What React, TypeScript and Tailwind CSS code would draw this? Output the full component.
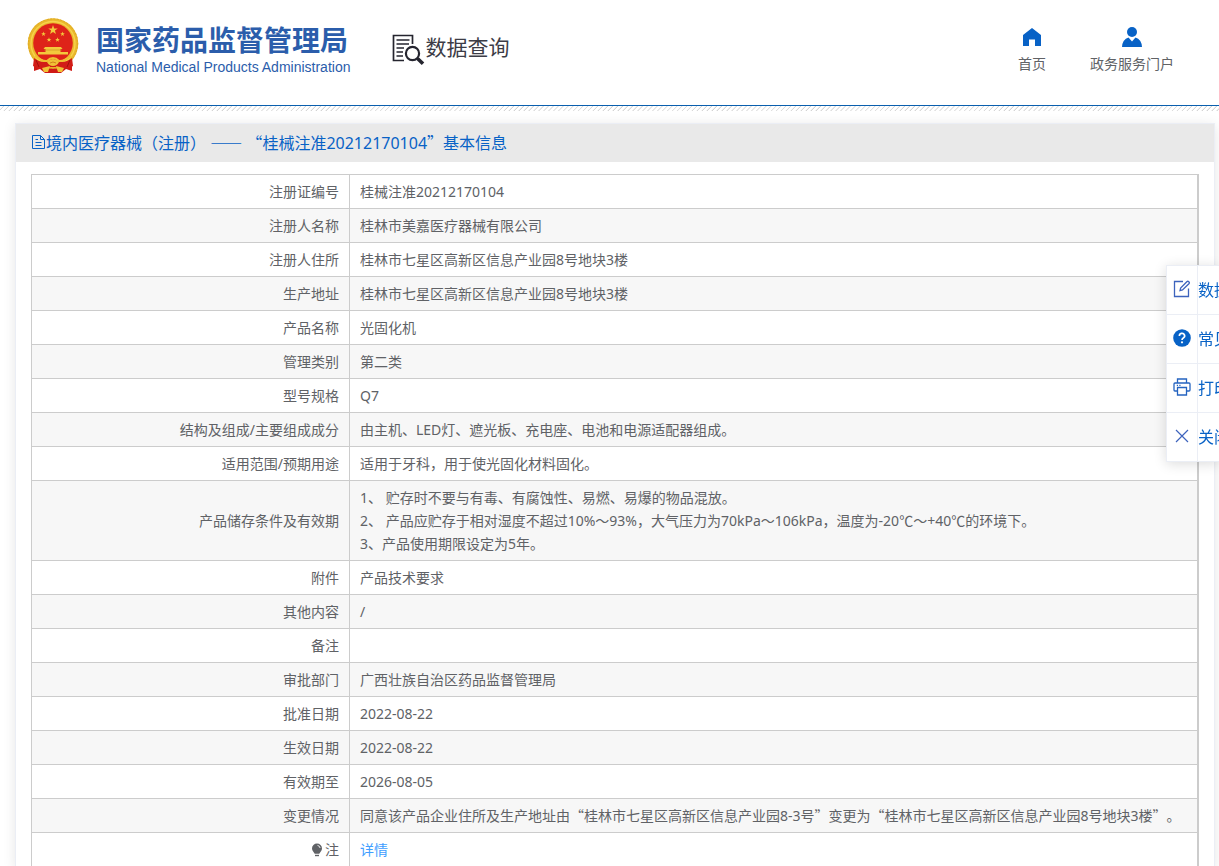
import { Fragment, type ReactNode } from "react";

const QUOTES = /([“”—～℃]+)/;

function Mixed({ text }: { text: string }) {
  return (
    <>
      {text.split(QUOTES).map((part, i) =>
        QUOTES.test(part) ? (
          <span key={i} className="font-['Noto_Sans_CJK_SC',sans-serif]">
            {part}
          </span>
        ) : (
          <Fragment key={i}>{part}</Fragment>
        ),
      )}
    </>
  );
}

const star = (cx: number, cy: number, r: number) =>
  Array.from({ length: 10 }, (_, i) => {
    const a = (Math.PI / 5) * i - Math.PI / 2;
    const d = i % 2 ? r * 0.4 : r;
    return `${(cx + d * Math.cos(a)).toFixed(2)},${(cy + d * Math.sin(a)).toFixed(2)}`;
  }).join(" ");

function Emblem() {
  return (
    <svg width="52" height="56" viewBox="0 0 52 56" aria-hidden="true">
      <path d="M7 39 L7 53 L13 51 L18 55 H34 L39 51 L45 53 L45 39 Z" fill="#cf1a16" />
      <circle cx="26" cy="25.5" r="25.3" fill="#eab92c" />
      <circle cx="26" cy="25.5" r="24.6" fill="none" stroke="#dfa824" strokeWidth="1" strokeDasharray="2 1.4" />
      <circle cx="26" cy="25.5" r="22" fill="none" stroke="#f7d34c" strokeWidth="1.4" />
      <circle cx="26" cy="25" r="19.8" fill="#de2319" />
      <polygon points={star(26, 12, 5)} fill="#f3c93c" />
      <polygon points={star(16.5, 16, 2.5)} fill="#f3c93c" />
      <polygon points={star(35.5, 16, 2.5)} fill="#f3c93c" />
      <polygon points={star(22, 21.7, 2.5)} fill="#f3c93c" />
      <polygon points={star(30.5, 21.7, 2.5)} fill="#f3c93c" />
      <path d="M18 29 H34 L35.5 31 H33.5 V34 H41 V36.500 H11 V34 H18.500 V31 H16.500 Z" fill="#f3c93c" />
      <path d="M17 32 H35" stroke="#c98a1c" strokeWidth=".6" />
      <path d="M7 40 Q15 46 21 43 Q26 39 31 43 Q37 46 45 40 L46 48 Q38 53 31 49 H21 Q14 53 6 48 Z" fill="#d21d17" />
      <path d="M8 38 Q15 43.500 20 43 Q23 40 26 40 Q29 40 32 43 Q37 43.500 44 38" fill="none" stroke="#f0bf32" strokeWidth="2" />
      <path d="M20 44 Q23 41 26 41 Q29 41 32 44 Q30 48 26 48 Q22 48 20 44 Z" fill="#f0c236" />
      <path d="M23 45 Q26 43 29 45" fill="none" stroke="#d2801b" strokeWidth="1" />
      <path d="M15 50 L23 48 L21 54 L17 54 Z M37 50 L29 48 L31 54 L35 54 Z" fill="#f0c236" />
      <path d="M9 42 L12 49 M43 42 L40 49" stroke="#9f100e" strokeWidth="1" />
    </svg>
  );
}

function SearchDoc() {
  return (
    <svg width="33" height="32" viewBox="0 0 33 32" fill="none" stroke="#25252f" aria-hidden="true">
      <path d="M20.500 10 V1.500 H1.500 V26.500 H12" strokeWidth="1.700" />
      <path d="M4.500 6 H17.500 M4.500 10 H17 M4.500 14 H12 M4.500 18 H11 M4.500 22 H11" strokeWidth="1.500" />
      <circle cx="20.500" cy="19.500" r="6.600" strokeWidth="2.200" />
      <path d="M25.500 24.500 L31 29.800" strokeWidth="3.600" />
    </svg>
  );
}

function HomeIcon() {
  return (
    <svg width="20" height="20" viewBox="0 0 20 20" aria-hidden="true">
      <path d="M10 1 L19 8 V19 H13 V12.500 H7 V19 H1 V8 Z" fill="#0862c6" />
    </svg>
  );
}

function UserIcon() {
  return (
    <svg width="20" height="20" viewBox="0 0 20 20" fill="#0862c6" aria-hidden="true">
      <circle cx="10" cy="5" r="5" />
      <path d="M6.500 10.600 L10 14.500 L13.500 10.600 Q19.500 12.500 20 20 H0 Q.5 12.500 6.500 10.600 Z" />
    </svg>
  );
}

function DocIcon() {
  return (
    <svg width="15" height="16" viewBox="0 0 15 16" fill="none" stroke="#0862c6" aria-hidden="true">
      <path d="M1.500 1.500 H9.500 L13.500 5.500 V14.500 H1.500 Z M9.500 1.500 V5.500 H13.500 M4.500 5.500 H7 M4.500 8.500 H10.500 M4.500 11.500 H10.500" />
    </svg>
  );
}

function BulbIcon() {
  return (
    <svg width="12" height="14" viewBox="0 0 12 14" className="mr-0.5 inline-block align-[-2px]" aria-hidden="true">
      <path d="M6 .5 A5 5 0 0 1 11 5.500 C11 8 9.200 8.800 8.300 10.800 H3.700 C2.800 8.800 1 8 1 5.500 A5 5 0 0 1 6 .5 Z" fill="#606266" />
      <path d="M4 12.500 H8" stroke="#606266" strokeWidth="1.400" />
      <path d="M6.500 2.400 Q8.800 2.800 9.100 5" fill="none" stroke="#fff" strokeWidth=".9" />
    </svg>
  );
}

function EditIcon() {
  return (
    <svg width="18" height="18" viewBox="0 0 18 18" fill="none" stroke="#3d63bd" strokeWidth="1.300" aria-hidden="true">
      <path d="M10 1.500 H1.500 V16.500 H15.500 V8.500" />
      <path d="M13.800 1.700 Q14.800 .8 15.800 1.700 Q16.800 2.700 15.900 3.700 L9.500 10 L7 10.700 L7.600 8 Z" />
    </svg>
  );
}

function QuestionIcon() {
  return (
    <svg width="18" height="18" viewBox="0 0 18 18" fill="none" aria-hidden="true">
      <circle cx="9" cy="9" r="8.800" fill="#0862c6" />
      <path d="M6.400 7 A2.600 2.500 0 1 1 10.300 9 Q9 9.800 9 11" stroke="#fff" strokeWidth="1.700" />
      <circle cx="9" cy="13.300" r="1.100" fill="#fff" />
    </svg>
  );
}

function PrintIcon() {
  return (
    <svg width="18" height="18" viewBox="0 0 18 18" fill="none" stroke="#2463c0" strokeWidth="1.300" aria-hidden="true">
      <path d="M4.500 5 V1 H13.500 V5 M4.500 13 H2 Q1 13 1 12 V6 Q1 5 2 5 H16 Q17 5 17 6 V12 Q17 13 16 13 H13.500 M4.500 9.500 H13.500 V17 H4.500 Z M3.800 7.300 H5 M6.300 7.300 H7.500" />
    </svg>
  );
}

function CloseIcon() {
  return (
    <svg width="18" height="18" viewBox="0 0 18 18" fill="none" stroke="#3d63bd" strokeWidth="1.200" aria-hidden="true">
      <path d="M3 3 L15 15 M15 3 L3 15" />
    </svg>
  );
}

const rows: { label: ReactNode; value: ReactNode }[] = [
  { label: "注册证编号", value: "桂械注准20212170104" },
  { label: "注册人名称", value: "桂林市美嘉医疗器械有限公司" },
  { label: "注册人住所", value: "桂林市七星区高新区信息产业园8号地块3楼" },
  { label: "生产地址", value: "桂林市七星区高新区信息产业园8号地块3楼" },
  { label: "产品名称", value: "光固化机" },
  { label: "管理类别", value: "第二类" },
  { label: "型号规格", value: "Q7" },
  { label: "结构及组成/主要组成成分", value: "由主机、LED灯、遮光板、充电座、电池和电源适配器组成。" },
  { label: "适用范围/预期用途", value: "适用于牙科，用于使光固化材料固化。" },
  {
    label: "产品储存条件及有效期",
    value: (
      <>
        1、 贮存时不要与有毒、有腐蚀性、易燃、易爆的物品混放。
        <br />
        <Mixed text="2、 产品应贮存于相对湿度不超过10%～93%，大气压力为70kPa～106kPa，温度为-20℃～+40℃的环境下。" />
        <br />
        3、产品使用期限设定为5年。
      </>
    ),
  },
  { label: "附件", value: "产品技术要求" },
  { label: "其他内容", value: "/" },
  { label: "备注", value: "" },
  { label: "审批部门", value: "广西壮族自治区药品监督管理局" },
  { label: "批准日期", value: "2022-08-22" },
  { label: "生效日期", value: "2022-08-22" },
  { label: "有效期至", value: "2026-08-05" },
  {
    label: "变更情况",
    value: (
      <Mixed text="同意该产品企业住所及生产地址由“桂林市七星区高新区信息产业园8-3号”变更为“桂林市七星区高新区信息产业园8号地块3楼”。" />
    ),
  },
  {
    label: (
      <>
        <BulbIcon />注
      </>
    ),
    value: (
      <a href="#detail" className="text-[#409eff]">
        详情
      </a>
    ),
  },
];

const tools = [
  { label: "数据纠错", icon: <EditIcon /> },
  { label: "常见问题", icon: <QuestionIcon /> },
  { label: "打印", icon: <PrintIcon /> },
  { label: "关闭", icon: <CloseIcon /> },
];

export default function App() {
  return (
    <div
      lang="zh-CN"
      className="min-h-screen overflow-hidden bg-white font-['Noto_Sans','Noto_Sans_CJK_SC',sans-serif] text-sm text-[#606266] [text-spacing-trim:space-all]"
    >
      <header className="flex h-[105px] items-start justify-between pr-[45px] pl-[27px]">
        <div className="flex items-start">
          <a href="#home" className="flex gap-[17px] pt-[18px]">
            <Emblem />
            <span className="flex flex-col whitespace-nowrap pt-[3px] text-[#2b5dab]">
              <span className="font-['Noto_Sans_CJK_SC',sans-serif] text-[28px] leading-9 font-bold">国家药品监督管理局</span>
              <span className="font-['Liberation_Sans',sans-serif] text-sm leading-5">National Medical Products Administration</span>
            </span>
          </a>
          <a href="#query" className="ml-[42px] flex items-start whitespace-nowrap pt-[34px] text-[#3c3c46]">
            <SearchDoc />
            <span className="text-[21px] leading-[26px]">数据查询</span>
          </a>
        </div>
        <nav className="flex gap-[44px] pt-[27px]">
          <a href="#home" className="flex flex-col items-center gap-1.5">
            <HomeIcon />
            <span className="leading-[22px]">首页</span>
          </a>
          <a href="#portal" className="flex flex-col items-center gap-1.5">
            <UserIcon />
            <span className="leading-[22px]">政务服务门户</span>
          </a>
        </nav>
      </header>
      <div className="h-[6px] border-t border-[#0a5fae] bg-[repeating-linear-gradient(135deg,#ffffff_0px,#ffffff_2px,#d2d2d2_3px,#ffffff_3.500px)]" />

      <main className="mt-3 mr-1 ml-[15px] border border-[#ebeef5] bg-white shadow-[0_2px_12px_rgba(0,0,0,0.1)]">
        <h1 className="flex h-[38px] items-center bg-[#e9e9e9] pb-0.5 pl-[15px] text-base text-[#0862c6]">
          <DocIcon />
          <span>
            <Mixed text="境内医疗器械（注册） —— “桂械注准20212170104”基本信息" />
          </span>
        </h1>
        <div className="px-[15px] pt-3">
          <table className="w-full table-fixed border-collapse border border-r-2 border-[#ccc]">
            <tbody>
              {rows.map((row, i) => (
                <tr key={i} className="border-b border-[#ccc] odd:bg-white even:bg-[#f7f7f7]">
                  <th
                    scope="row"
                    className="w-[318px] border-r border-[#ccc] px-2.5 py-[5px] text-right leading-[23px] font-normal"
                  >
                    {row.label}
                  </th>
                  <td className="h-[33px] py-[5px] pr-2 pl-2.5 leading-[23px]">
                    {typeof row.value === "string" ? <Mixed text={row.value} /> : row.value}
                  </td>
                </tr>
              ))}
            </tbody>
          </table>
        </div>
      </main>

      <aside className="fixed top-[265px] right-0 w-[53px] overflow-hidden border-t border-[#ebeef5] bg-white shadow-[0_2px_12px_rgba(0,0,0,0.14)]">
        {tools.map((tool) => (
          <button
            key={tool.label}
            type="button"
            className="flex h-[49px] w-[110px] items-stretch border-b border-l border-[#ebeef5] text-base whitespace-nowrap text-[#0862c6]"
          >
            <span className="flex w-[31px] items-center justify-center border-r border-[#ebeef5] pb-0.5">{tool.icon}</span>
            <span className="flex items-center">{tool.label}</span>
          </button>
        ))}
      </aside>
    </div>
  );
}
